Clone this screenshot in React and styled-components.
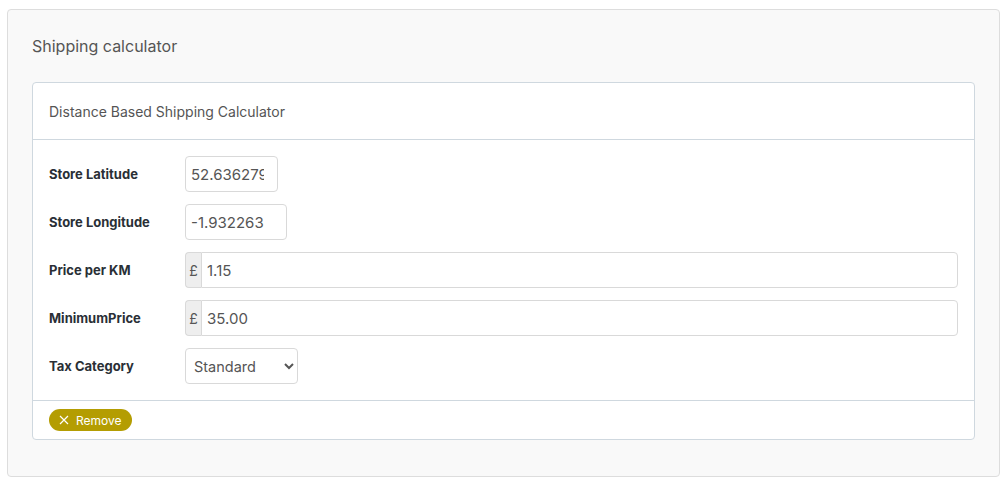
import styled, { createGlobalStyle } from "styled-components";

const GlobalStyle = createGlobalStyle`
  html, body {
    margin: 0;
    background: #ffffff;
    font-family: Inter, "Noto Sans", "Liberation Sans", sans-serif;
  }
`;

const fields = [
  { label: "Store Latitude", value: "52.636279", width: 93 },
  { label: "Store Longitude", value: "-1.932263", width: 102 },
  { label: "Price per KM", value: "1.15", prefix: "£" },
  { label: "MinimumPrice", value: "35.00", prefix: "£" },
];

const App = () => {
  return (
    <Page>
      <GlobalStyle />
      <OuterCard>
        <Title>Shipping calculator</Title>
        <Panel>
          <PanelHeader>Distance Based Shipping Calculator</PanelHeader>
          <PanelBody>
            {fields.map((f) => (
              <Row key={f.label}>
                <Label>{f.label}</Label>
                {f.prefix ? (
                  <Group>
                    <Addon>{f.prefix}</Addon>
                    <Input $grouped defaultValue={f.value} />
                  </Group>
                ) : (
                  <Input $width={f.width} defaultValue={f.value} />
                )}
              </Row>
            ))}
            <Row>
              <Label>Tax Category</Label>
              <Select defaultValue="standard">
                <option value="standard">Standard</option>
                <option value="reduced">Reduced</option>
                <option value="zero">Zero</option>
              </Select>
            </Row>
          </PanelBody>
          <PanelFooter>
            <RemoveButton>
              <svg width="10" height="10" viewBox="0 0 10 10">
                <path
                  d="M1 1 L9 9 M9 1 L1 9"
                  stroke="#fff"
                  strokeWidth="1.2"
                  fill="none"
                />
              </svg>
              Remove
            </RemoveButton>
          </PanelFooter>
        </Panel>
      </OuterCard>
    </Page>
  );
};

export default App;

const Page = styled.div`
  padding: 9px 6px 10px 7px;
`;

const OuterCard = styled.div`
  background: #f9f9f9;
  border: 1px solid #dddddd;
  border-radius: 4px;
  padding: 26px 24px 36px 24px;
`;

const Title = styled.h2`
  margin: 0 0 26px 0;
  font-size: 16px;
  font-weight: 400;
  line-height: 20px;
  color: #555555;
`;

const Panel = styled.div`
  background: #ffffff;
  border: 1px solid #cfd8df;
  border-radius: 4px;
`;

const PanelHeader = styled.div`
  height: 56px;
  display: flex;
  align-items: center;
  padding: 0 16px;
  font-size: 14px;
  color: #555555;
  border-bottom: 1px solid #cfd8df;
`;

const PanelBody = styled.div`
  padding: 16px 16px 16px 16px;
  display: flex;
  flex-direction: column;
  gap: 12px;
`;

const Row = styled.div`
  display: flex;
  align-items: center;
  height: 36px;
`;

const Label = styled.label`
  width: 136px;
  flex: none;
  font-size: 13px;
  font-weight: 700;
  color: #2a2f36;
`;

const Input = styled.input`
  box-sizing: border-box;
  height: 36px;
  width: ${(p) => (p.$grouped ? "auto" : `${p.$width}px`)};
  flex: ${(p) => (p.$grouped ? "1" : "none")};
  min-width: 0;
  padding: 0 13px 0 5px;
  font-family: inherit;
  font-size: 15px;
  color: #555555;
  background: #ffffff;
  border: 1px solid #d9d9d9;
  border-radius: ${(p) => (p.$grouped ? "0 4px 4px 0" : "4px")};
  outline: none;
`;

const Group = styled.div`
  display: flex;
  flex: 1;
  height: 36px;
`;

const Addon = styled.span`
  box-sizing: border-box;
  width: 16px;
  display: flex;
  align-items: center;
  justify-content: center;
  font-size: 14px;
  color: #555555;
  background: #eeeeee;
  border: 1px solid #d9d9d9;
  border-right: none;
  border-radius: 4px 0 0 4px;
`;

const Select = styled.select`
  box-sizing: border-box;
  height: 36px;
  width: 113px;
  padding: 0 4px;
  font-family: inherit;
  font-size: 14.5px;
  color: #555555;
  background: #ffffff;
  border: 1px solid #d9d9d9;
  border-radius: 4px;
`;

const PanelFooter = styled.div`
  border-top: 1px solid #cfd8df;
  padding: 8px 16px;
  height: 22px;
  display: flex;
  align-items: center;
`;

const RemoveButton = styled.button`
  display: inline-flex;
  align-items: center;
  gap: 7px;
  height: 22px;
  padding: 0 10px 0 10px;
  border: none;
  border-radius: 11px;
  background: #b49d02;
  color: #ffffff;
  font-family: inherit;
  font-size: 12px;
  cursor: pointer;
`;
